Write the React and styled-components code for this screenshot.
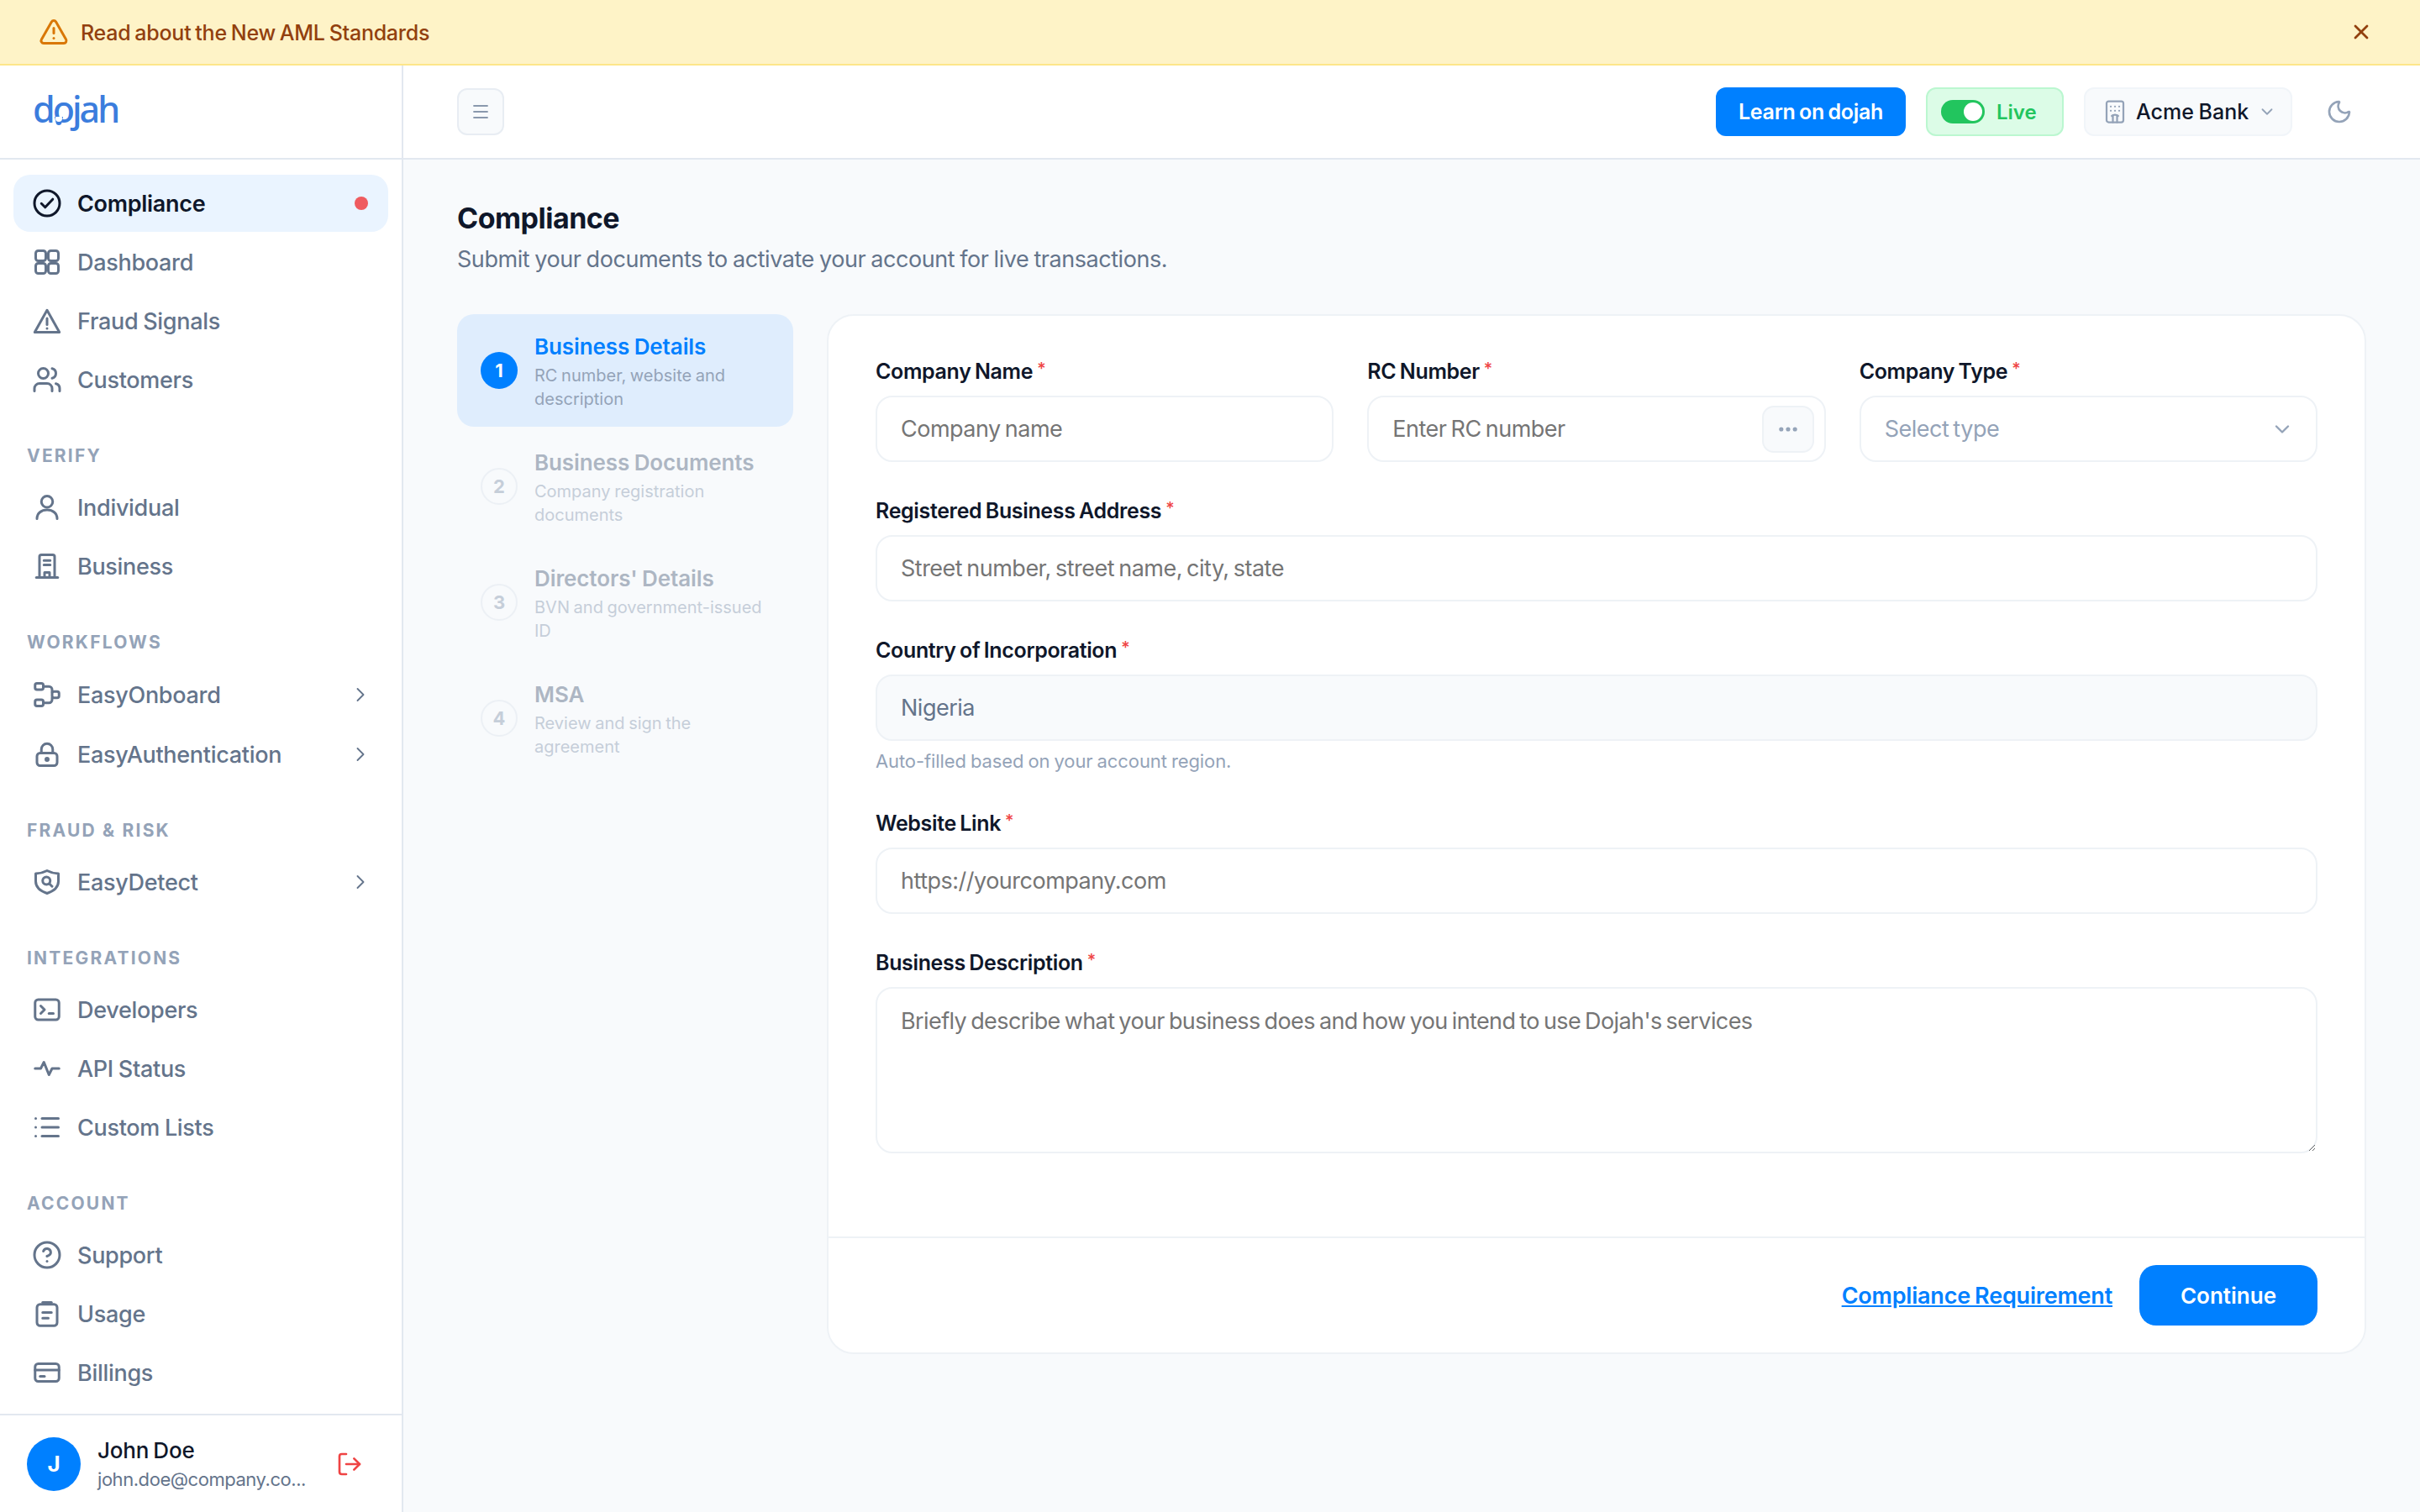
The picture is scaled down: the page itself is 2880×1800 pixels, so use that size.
import React from 'react';
import styled, { createGlobalStyle } from 'styled-components';
import { TriangleAlert, Users, CircleHelp, LogOut, Menu, X, Moon, ChevronRight, ChevronDown, Ellipsis, Hotel, List } from 'lucide-react';

const Global = createGlobalStyle`
  html, body { margin: 0; padding: 0; height: 100%; }
  body { font-family: Inter, "Noto Sans", sans-serif; background: #f8fafc; color: #0f172a; }
  * { box-sizing: border-box; }
  input::placeholder, textarea::placeholder { color: #757575; opacity: 1; }
`;

const Page = styled.div`
  width: 2880px; height: 1800px; display: flex; flex-direction: column; overflow: hidden;
`;
const Banner = styled.div`
  height: 78px; flex: none; display: flex; align-items: center; justify-content: space-between;
  padding: 0 56px 0 46px; background: #fef3c7; border-bottom: 2px solid #fde68a;
  color: #92400e; font-size: 25px; font-weight: 500; letter-spacing: -0.25px; word-spacing: -1.5px;
`;
const BannerLeft = styled.div`
  display: flex; align-items: center; gap: 14px; color: #d97706;
`;
const BannerText = styled.span`color: #92400e; padding-top: 2px;`;
const Body = styled.div`flex: 1; display: flex; min-height: 0;`;
const Sidebar = styled.aside`
  width: 480px; flex: none; background: #fff; border-right: 2px solid #e2e8f0;
  display: flex; flex-direction: column;
`;
const LogoBar = styled.div`
  height: 112px; flex: none; border-bottom: 2px solid #e2e8f0; display: flex; align-items: center; padding: 0 0 8px 39px;
`;
const Logo = styled.div`
  position: relative; font-family: "Noto Sans", sans-serif; font-size: 43px; font-weight: 500; color: #3b7ddd; letter-spacing: -3px; line-height: 1;
`;
const LogoBulb = styled.svg`position: absolute; left: 24px; bottom: 0; width: 14px; height: 12px;`;
const Nav = styled.nav`flex: 1; padding: 18px 16px 0; min-height: 0;`;
const NavGroup = styled.div`display: flex; flex-direction: column; gap: 2px;`;
const GroupTitle = styled.div`
  height: 32px; margin: 40px 0 12px 16px; display: flex; align-items: center;
  font-size: 21px; font-weight: 700; letter-spacing: 2.2px; color: #94a3b8; text-transform: uppercase;
`;
const NavItem = styled.div`
  height: ${p => (p.$tall ? 69 : 68)}px; display: flex; align-items: center; gap: 18px; padding: 0 22px;
  border-radius: 20px; font-size: 27px; letter-spacing: -0.3px; word-spacing: -1px; font-weight: ${p => (p.$active ? 600 : 500)};
  background: ${p => (p.$active ? '#eaf4ff' : 'transparent')};
  color: ${p => (p.$active ? '#0f172a' : '#64748b')};
`;
const NavLabel = styled.span`flex: 1; padding-top: 1px;`;
const NavChevron = styled(ChevronRight)`margin-right: -3px;`;
const RedDot = styled.span`width: 16px; height: 16px; border-radius: 50%; background: #ef5b5f; margin-right: 2px;`;
const UserBar = styled.div`
  height: 117px; flex: none; border-top: 2px solid #e2e8f0; display: flex; align-items: center; padding: 0 46px 0 32px; gap: 20px;
`;
const Avatar = styled.div`
  width: 64px; height: 64px; border-radius: 50%; background: #0080ff; color: #fff; font-size: 26px; font-weight: 700;
  display: flex; align-items: center; justify-content: center; flex: none;
`;
const UserInfo = styled.div`flex: 1; min-width: 0; display: flex; flex-direction: column; gap: 2px;`;
const UserName = styled.div`font-size: 26px; font-weight: 500; color: #0f172a; line-height: 34px; letter-spacing: -0.2px; word-spacing: -1.5px;`;
const UserMail = styled.div`font-size: 22px; letter-spacing: -0.45px; color: #64748b; line-height: 30px; white-space: nowrap;`;

const Main = styled.main`flex: 1; min-width: 0; display: flex; flex-direction: column;`;
const TopBar = styled.header`
  height: 112px; flex: none; background: #fff; border-bottom: 2px solid #e2e8f0; display: flex; align-items: center;
  padding: 0 64px;
`;
const MenuBtn = styled.button`
  width: 56px; height: 56px; border: 2px solid #e8edf3; background: #f8fafc; border-radius: 12px; color: #8a98ad;
  display: flex; align-items: center; justify-content: center; padding: 0; margin-right: auto;
`;
const LearnBtn = styled.button`
  width: 226px; height: 58px; border: 0; border-radius: 12px; background: #0080ff; color: #fff; font: 600 25px Inter, sans-serif; letter-spacing: -0.3px; word-spacing: -1.5px; padding: 0;
`;
const LivePill = styled.div`
  width: 164px; height: 58px; margin-left: 24px; border: 2px solid #bbf7d0; background: #dcfce7; border-radius: 12px; display: flex; align-items: center;
  padding-left: 16px; gap: 14px; color: #22c55e; font-size: 24px; font-weight: 600;
`;
const Toggle = styled.span`
  width: 52px; height: 28px; border-radius: 14px; background: #22c55e; display: flex; align-items: center; justify-content: flex-end; padding-right: 3px;
`;
const Knob = styled.span`width: 22px; height: 22px; border-radius: 50%; background: #fff;`;
const BankBtn = styled.div`
  width: 248px; height: 58px; margin-left: 24px; border: 2px solid #f1f5f9; background: #f8fafc; border-radius: 12px; display: flex; align-items: center;
  padding-left: 20px; gap: 10px; color: #0f172a; font-size: 25px; font-weight: 500; word-spacing: -1px;
`;
const BankName = styled.span`flex: none; margin-right: 1px;`;
const MoonWrap = styled.div`margin: 0 16px 0 40px; width: 32px; height: 32px; color: #94a3b8; display: flex;`;

const Content = styled.div`flex: 1; padding: 48px 64px 0; background: #f8fafc;`;
const Title = styled.h1`margin: 0; font-size: 34px; letter-spacing: -0.5px; line-height: 44px; font-weight: 700; color: #0f172a;`;
const Sub = styled.p`margin: 7px 0 45px; font-size: 27px; letter-spacing: -0.45px; word-spacing: -1px; line-height: 40px; color: #64748b;`;
const Columns = styled.div`display: grid; grid-template-columns: 400px 1832px; gap: 40px; align-items: start;`;
const Steps = styled.div`display: flex; flex-direction: column; gap: 4px;`;
const Step = styled.div`
  height: 134px; display: flex; align-items: center; gap: 20px; padding: 0 28px; border-radius: 20px;
  background: ${p => (p.$active ? '#dfedfd' : 'transparent')};
  opacity: ${p => (p.$active ? 1 : 0.5)};
`;
const StepNum = styled.div`
  width: 44px; height: 44px; flex: none; border-radius: 50%; font-size: 22px; font-weight: 700; display: flex; align-items: center; justify-content: center;
  background: ${p => (p.$active ? '#0080ff' : 'transparent')};
  color: ${p => (p.$active ? '#fff' : '#94a3b8')};
  border: ${p => (p.$active ? 'none' : '2px solid #e2e8f0')};
`;
const StepText = styled.div`display: flex; flex-direction: column;`;
const StepTitle = styled.div`font-size: 26px; letter-spacing: -0.1px; word-spacing: -1px; line-height: 38px; white-space: nowrap; font-weight: 600; color: ${p => (p.$active ? '#0080ff' : '#64748b')};`;
const StepDesc = styled.div`font-size: 20px; word-spacing: -1px; line-height: 28px; padding-top: 1px; color: #94a3b8;`;

const Card = styled.section`background: #fff; border: 2px solid #eef2f6; border-radius: 32px; display: flex; flex-direction: column;`;
const Form = styled.div`padding: 51px 56px 99px; display: grid; grid-template-columns: repeat(3, 1fr); column-gap: 40px; row-gap: 43px;`;
const Field = styled.div`display: flex; flex-direction: column; min-width: 0; grid-column: ${p => (p.$full ? '1 / -1' : 'auto')};`;
const Label = styled.label`height: 30px; line-height: 30px; margin-bottom: 14px; font-size: 25px; letter-spacing: -0.35px; word-spacing: -1.5px; font-weight: 600; color: #0f172a; display: block;`;
const Star = styled.sup`color: #ef4444; margin-left: 5px; font-size: 20px; line-height: 0; vertical-align: 5px; font-weight: 500;`;
const InputBox = styled.div`position: relative; display: flex;`;
const Input = styled.input`
  width: 100%; height: 79px; border: 2px solid #eef2f6; border-radius: 20px; padding: 0 28px; font: 400 27px Inter, sans-serif; letter-spacing: -0.5px; word-spacing: -2px; outline: none;
  background: ${p => (p.disabled ? '#f8fafc' : '#fff')}; color: #64748b;
  &:disabled { -webkit-text-fill-color: #64748b; opacity: 1; }
`;
const Dots = styled.button`
  position: absolute; right: 14px; top: 12px; width: 62px; height: 56px; border: 2px solid #eef2f6; background: #f8fafc; border-radius: 14px; color: #94a3b8;
  display: flex; align-items: center; justify-content: center; padding: 0;
`;
const Select = styled.div`
  height: 79px; border: 2px solid #eef2f6; border-radius: 20px; padding: 0 26px 0 28px; display: flex; align-items: center; justify-content: space-between;
  font-size: 27px; letter-spacing: -0.5px; word-spacing: -2px; color: #94a3b8; background: #fff;
`;
const Help = styled.div`margin-top: 9px; height: 31px; line-height: 31px; font-size: 22px; letter-spacing: -0.1px; word-spacing: -1px; color: #94a3b8;`;
const Area = styled.textarea`
  width: 100%; height: 198px; border: 2px solid #eef2f6; border-radius: 20px; padding: 21px 28px; font: 400 27px/36px Inter, sans-serif; letter-spacing: -0.6px; word-spacing: -2px; outline: none; resize: vertical; display: block;
`;
const CardFooter = styled.div`
  border-top: 2px solid #eef2f6; padding: 32px 56px; display: flex; justify-content: flex-end; align-items: center; gap: 32px;
`;
const ReqLink = styled.a`font-size: 27px; letter-spacing: -0.2px; word-spacing: -1.5px; font-weight: 600; color: #0080ff; text-decoration: underline;`;
const Continue = styled.button`
  width: 212px; height: 72px; border: 0; border-radius: 20px; background: #0080ff; color: #fff; font: 600 26px Inter, sans-serif; padding: 0;
`;

const Ico = ({ children }) => (
  <svg width="36" height="36" viewBox="0 0 24 24" fill="none" stroke="currentColor" strokeWidth="2" strokeLinecap="round" strokeLinejoin="round">{children}</svg>
);
const Check = () => <Ico><circle cx="12" cy="12" r="10" /><path d="m7.500 12.200 3 3 6-6.400" /></Ico>;
const Grid = () => <Ico><rect x="3" y="3" width="8" height="8" rx="2" /><rect x="13" y="3" width="8" height="8" rx="2" /><rect x="3" y="13" width="8" height="8" rx="2" /><rect x="13" y="13" width="8" height="8" rx="2" /></Ico>;
const Warn = () => <Ico><path d="M12 3.500 21.800 21H2.200Z" /><path d="M12 10v5" /><path d="M12 18h.01" /></Ico>;
const Person = () => <Ico><circle cx="12" cy="7.500" r="4.500" /><path d="M4 21c0-4.500 3.600-7 8-7s8 2.500 8 7" /></Ico>;
const Office = () => <Ico><path d="M6 21V4.500A1.500 1.500 0 0 1 7.500 3h9A1.500 1.500 0 0 1 18 4.500V21" /><path d="M3.500 21h17" /><path d="M9.500 7.500h5M9.500 11h5" /><path d="M10 21v-4h4v4" /></Ico>;
const Flow = () => <Ico><rect x="2.500" y="3" width="6.500" height="5" rx="1.500" /><rect x="2.500" y="16" width="6.500" height="5" rx="1.500" /><rect x="16" y="9.500" width="5.500" height="5" rx="1.500" /><path d="M9 5.500h4.500a2.500 2.500 0 0 1 2.500 2.500v2" /><path d="M9 18.500h4.500a2.500 2.500 0 0 0 2.500-2.500v-1.500" /></Ico>;
const Padlock = () => <Ico><rect x="4" y="11" width="16" height="10" rx="2.500" /><path d="M7.500 11V8a4.500 4.500 0 0 1 9 0v3" /><circle cx="12" cy="16" r="1" /></Ico>;
const ShieldScan = () => <Ico><path d="M12 3c3 1.600 6 2.200 9 2.400v6.100c0 4.400-3.400 7.600-9 9.500-5.600-1.900-9-5.100-9-9.500V5.400c3-.2 6-.8 9-2.400Z" /><circle cx="11.500" cy="11" r="3" /><path d="m14 13.500 2 2" /></Ico>;
const Terminal = () => <Ico><rect x="2.500" y="4" width="19" height="16" rx="2.500" /><path d="m7 9 3 3-3 3" /><path d="M13.500 15H17" /></Ico>;
const Pulse = () => <Ico><path d="M2.500 12H7l2.500-5 4 10 2.500-5h5.500" /></Ico>;
const Usage = () => <Ico><rect x="4" y="4.500" width="16" height="17" rx="2.500" /><path d="M8.500 3h7" /><path d="M8.500 11h7M8.500 15.500h4.500" /></Ico>;
const Card2 = () => <Ico><rect x="2.500" y="5" width="19" height="14" rx="2.500" /><path d="M2.500 10h19" /><path d="M6.500 15H10" /></Ico>;

const NavRow = ({ icon: I, label, chevron, tall }) => (
  <NavItem $tall={tall}>
    <I />
    <NavLabel>{label}</NavLabel>
    {chevron && <NavChevron size={28} strokeWidth={1.6} />}
  </NavItem>
);
const UsersIcon = () => <Users size={36} strokeWidth={2} />;
const ListIcon = () => <List size={36} strokeWidth={2} />;
const HelpIcon = () => <CircleHelp size={36} strokeWidth={2} />;
const Req = ({ children }) => <Label>{children}<Star>*</Star></Label>;

const stepData = [
  ['Business Details', 'RC number, website and description'],
  ['Business Documents', 'Company registration documents'],
  ["Directors' Details", 'BVN and government-issued ID'],
  ['MSA', 'Review and sign the agreement'],
];

export default function App() {
  return (
    <Page>
      <Global />
      <Banner>
        <BannerLeft>
          <TriangleAlert size={36} strokeWidth={2} />
          <BannerText>Read about the New AML Standards</BannerText>
        </BannerLeft>
        <X size={28} strokeWidth={2.4} />
      </Banner>
      <Body>
        <Sidebar>
          <LogoBar>
            <Logo>
              dojah
              <LogoBulb viewBox="0 0 14 12"><path d="M2 0h10l-1.500 7q-.5 3-3.500 3T3.500 7Z" fill="#3b7ddd" /><circle cx="7" cy="2" r="4" fill="#fff" /></LogoBulb>
            </Logo>
          </LogoBar>
          <Nav>
            <NavGroup>
              <NavItem $active>
                <Check />
                <NavLabel>Compliance</NavLabel>
                <RedDot />
              </NavItem>
              <NavRow icon={Grid} label="Dashboard" />
              <NavRow icon={Warn} label="Fraud Signals" />
              <NavRow icon={UsersIcon} label="Customers" />
            </NavGroup>
            <GroupTitle>Verify</GroupTitle>
            <NavGroup>
              <NavRow icon={Person} label="Individual" />
              <NavRow icon={Office} label="Business" />
            </NavGroup>
            <GroupTitle>Workflows</GroupTitle>
            <NavGroup>
              <NavRow icon={Flow} label="EasyOnboard" chevron tall />
              <NavRow icon={Padlock} label="EasyAuthentication" chevron tall />
            </NavGroup>
            <GroupTitle>Fraud &amp; Risk</GroupTitle>
            <NavGroup>
              <NavRow icon={ShieldScan} label="EasyDetect" chevron />
            </NavGroup>
            <GroupTitle>Integrations</GroupTitle>
            <NavGroup>
              <NavRow icon={Terminal} label="Developers" />
              <NavRow icon={Pulse} label="API Status" />
              <NavRow icon={ListIcon} label="Custom Lists" />
            </NavGroup>
            <GroupTitle>Account</GroupTitle>
            <NavGroup>
              <NavRow icon={HelpIcon} label="Support" />
              <NavRow icon={Usage} label="Usage" />
              <NavRow icon={Card2} label="Billings" />
            </NavGroup>
          </Nav>
          <UserBar>
            <Avatar>J</Avatar>
            <UserInfo>
              <UserName>John Doe</UserName>
              <UserMail>john.doe@company.co...</UserMail>
            </UserInfo>
            <LogOut size={32} strokeWidth={2} color="#ef4444" />
          </UserBar>
        </Sidebar>
        <Main>
          <TopBar>
            <MenuBtn><Menu size={24} strokeWidth={1.8} /></MenuBtn>
            <LearnBtn>Learn on dojah</LearnBtn>
            <LivePill><Toggle><Knob /></Toggle>Live</LivePill>
            <BankBtn>
              <Hotel size={30} strokeWidth={1.8} color="#94a3b8" />
              <BankName>Acme Bank</BankName>
              <ChevronDown size={22} strokeWidth={2} color="#94a3b8" />
            </BankBtn>
            <MoonWrap><Moon size={32} strokeWidth={2} /></MoonWrap>
          </TopBar>
          <Content>
            <Title>Compliance</Title>
            <Sub>Submit your documents to activate your account for live transactions.</Sub>
            <Columns>
              <Steps>
                {stepData.map(([t, d], i) => (
                  <Step key={t} $active={i === 0}>
                    <StepNum $active={i === 0}>{i + 1}</StepNum>
                    <StepText>
                      <StepTitle $active={i === 0}>{t}</StepTitle>
                      <StepDesc>{d}</StepDesc>
                    </StepText>
                  </Step>
                ))}
              </Steps>
              <Card>
                <Form>
                  <Field>
                    <Req>Company Name</Req>
                    <Input placeholder="Company name" />
                  </Field>
                  <Field>
                    <Req>RC Number</Req>
                    <InputBox>
                      <Input placeholder="Enter RC number" />
                      <Dots><Ellipsis size={28} strokeWidth={2.4} /></Dots>
                    </InputBox>
                  </Field>
                  <Field>
                    <Req>Company Type</Req>
                    <Select>Select type<ChevronDown size={28} strokeWidth={2} color="#94a3b8" /></Select>
                  </Field>
                  <Field $full>
                    <Req>Registered Business Address</Req>
                    <Input placeholder="Street number, street name, city, state" />
                  </Field>
                  <Field $full>
                    <Req>Country of Incorporation</Req>
                    <Input disabled value="Nigeria" readOnly />
                    <Help>Auto-filled based on your account region.</Help>
                  </Field>
                  <Field $full>
                    <Req>Website Link</Req>
                    <Input placeholder="https://yourcompany.com" />
                  </Field>
                  <Field $full>
                    <Req>Business Description</Req>
                    <Area placeholder="Briefly describe what your business does and how you intend to use Dojah's services" />
                  </Field>
                </Form>
                <CardFooter>
                  <ReqLink href="#">Compliance Requirement</ReqLink>
                  <Continue>Continue</Continue>
                </CardFooter>
              </Card>
            </Columns>
          </Content>
        </Main>
      </Body>
    </Page>
  );
}
